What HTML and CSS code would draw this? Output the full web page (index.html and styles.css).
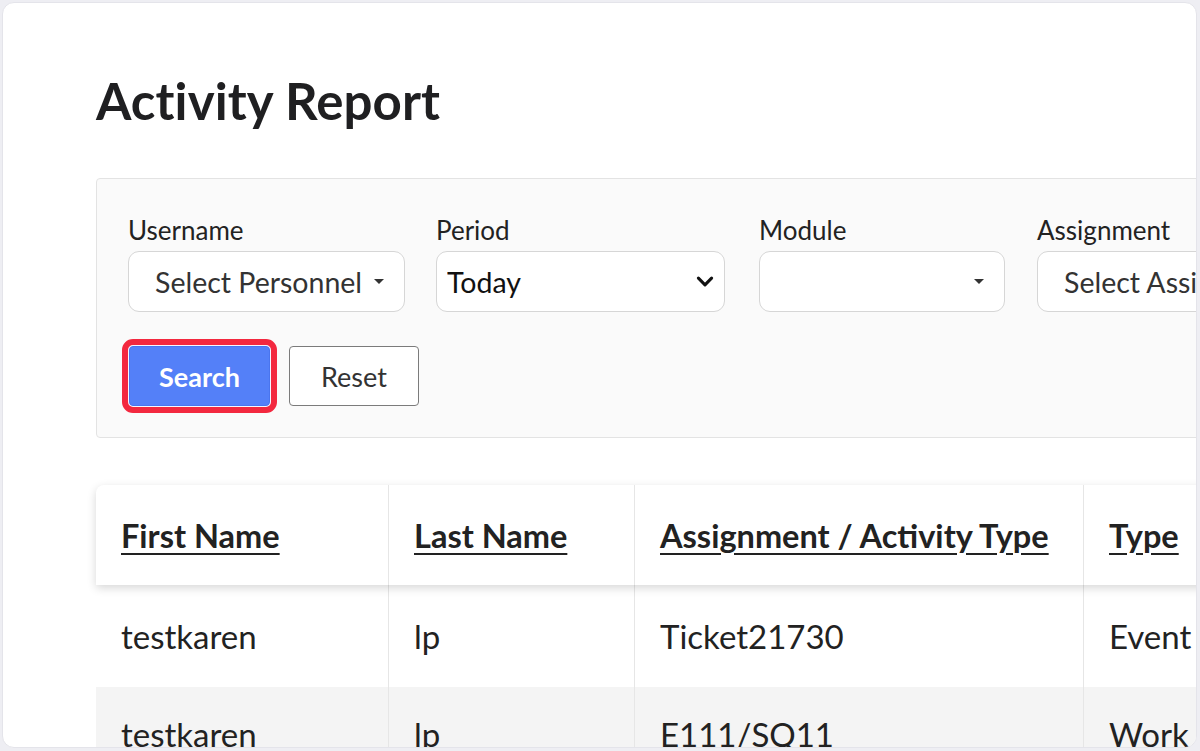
FILE: index.html
```html
<!DOCTYPE html>
<html lang="en">
<head>
<meta charset="utf-8">
<title>Activity Report</title>
<link rel="stylesheet" href="styles.css">
</head>
<body>
<div class="frame">
  <main class="page">
    <h1 class="title">Activity Report</h1>

    <section class="filters">
      <div class="filter-row">
        <div class="field field-user">
          <label class="field-label">Username</label>
          <div class="select select-picker">
            <span class="select-text">Select Personnel</span>
            <span class="caret"></span>
          </div>
        </div>
        <div class="field field-period">
          <label class="field-label">Period</label>
          <div class="select select-native">
            <span class="select-text">Today</span>
            <svg class="chevron" viewBox="0 0 16 10" width="18" height="11" aria-hidden="true">
              <path d="M2 2 L8 8 L14 2" fill="none" stroke="#111" stroke-width="2.8" stroke-linecap="round" stroke-linejoin="round"/>
            </svg>
          </div>
        </div>
        <div class="field field-module">
          <label class="field-label">Module</label>
          <div class="select select-picker">
            <span class="select-text"></span>
            <span class="caret"></span>
          </div>
        </div>
        <div class="field field-assign">
          <label class="field-label">Assignment</label>
          <div class="select select-picker">
            <span class="select-text">Select Assignment</span>
            <span class="caret"></span>
          </div>
        </div>
      </div>
      <div class="actions">
        <button class="btn btn-primary">Search</button>
        <button class="btn btn-default">Reset</button>
      </div>
    </section>

    <div class="table">
      <div class="thead">
        <div class="cell c1"><a class="sort">First Name</a></div>
        <div class="cell c2"><a class="sort">Last Name</a></div>
        <div class="cell c3"><a class="sort">Assignment / Activity Type</a></div>
        <div class="cell c4"><a class="sort">Type</a></div>
      </div>
      <div class="trow">
        <div class="cell c1">testkaren</div>
        <div class="cell c2">lp</div>
        <div class="cell c3">Ticket21730</div>
        <div class="cell c4">Event</div>
      </div>
      <div class="trow odd">
        <div class="cell c1">testkaren</div>
        <div class="cell c2">lp</div>
        <div class="cell c3">E111/SQ11</div>
        <div class="cell c4">Work Shift</div>
      </div>
    </div>
  </main>
</div>
</body>
</html>
```

FILE: styles.css
```css
* { box-sizing: border-box; }

html, body {
  margin: 0;
  padding: 0;
  background: #eeeef3;
  height: 751px;
  overflow: hidden;
}

body {
  font-family: Lato, "Liberation Sans", sans-serif;
  color: #222;
}

.frame {
  margin: 2px 3px 3px 2px;
  height: 746px;
  background: #ffffff;
  border: 1px solid #e4e4ea;
  border-radius: 12px;
  overflow: hidden;
}

.page {
  padding: 0 0 0 93px;
  width: 1500px;
}

.title {
  margin: 0;
  padding-top: 70px;
  font-size: 51px;
  line-height: 56px;
  font-weight: 700;
  color: #1f1f21;
  letter-spacing: 0.1px;
}

/* filter panel */
.filters {
  margin-top: 49px;
  background: #fafafa;
  border: 1px solid #e3e3e3;
  border-radius: 4px;
  padding: 35px 0 31px 31px;
}

.filter-row {
  display: flex;
}

.field { display: flex; flex-direction: column; }
.field-user { width: 308px; }
.field-period { width: 323px; }
.field-module { width: 278px; }
.field-assign { width: 300px; }

.field-user .select { width: 277px; }
.field-period .select { width: 289px; }
.field-module .select { width: 246px; }
.field-assign .select { width: 300px; }

.field-label {
  font-size: 26px;
  line-height: 32px;
  color: #222;
  margin-bottom: 5px;
  white-space: nowrap;
}

.select {
  height: 61px;
  background: #fff;
  border: 1.5px solid #d6d6d6;
  border-radius: 11px;
  display: flex;
  align-items: center;
  font-size: 28.5px;
  color: #333;
}

.select-picker {
  padding: 0 20px 0 26px;
}

.select-native {
  padding: 0 10px 0 10px;
  color: #111;
}

.select-text { flex: 1; white-space: nowrap; overflow: hidden; }

.caret {
  flex: none;
  width: 0;
  height: 0;
  border-left: 5px solid transparent;
  border-right: 5px solid transparent;
  border-top: 5px solid #333;
}

.chevron { display: block; flex: none; }

.actions {
  display: flex;
  gap: 19px;
  margin-top: 34px;
  padding-left: 1px;
}

.btn {
  height: 60px;
  font-family: Lato, "Liberation Sans", sans-serif;
  font-size: 27px;
  border-radius: 4px;
  padding: 0;
  cursor: pointer;
}

.btn-primary {
  width: 141px;
  background: #5480f8;
  border: 1px solid #4a75ee;
  color: #fff;
  font-weight: 700;
  outline: 6px solid #f3283f;
  outline-offset: 1px;
  box-shadow: 0 0 0 1px #f4f6ff;
}

.btn-default {
  width: 130px;
  background: #fff;
  border: 1.5px solid #7b7b7b;
  color: #333;
}

/* results table */
.table {
  margin-top: 47px;
  width: 1300px;
}

.thead,
.trow {
  display: flex;
}

.thead {
  height: 100px;
  background: #fff;
  border-radius: 8px 0 0 0;
  box-shadow: 0 3px 10px rgba(0, 0, 0, 0.16);
  position: relative;
  z-index: 1;
}

.trow { height: 102px; background: #fff; }
.trow.odd { background: #f4f4f4; padding-bottom: 8px; }

.cell {
  display: flex;
  align-items: center;
  padding-left: 25px;
  font-size: 33px;
  color: #222;
  border-right: 1.5px solid #e6e6e6;
  white-space: nowrap;
}

.c1 { width: 293px; }
.c2 { width: 246px; }
.c3 { width: 449px; }
.c4 { width: 300px; border-right: none; }

.sort {
  font-weight: 700;
  font-size: 32.5px;
  color: #222;
  text-decoration: underline;
  text-underline-offset: 5px;
  text-decoration-thickness: 2px;
}
```
